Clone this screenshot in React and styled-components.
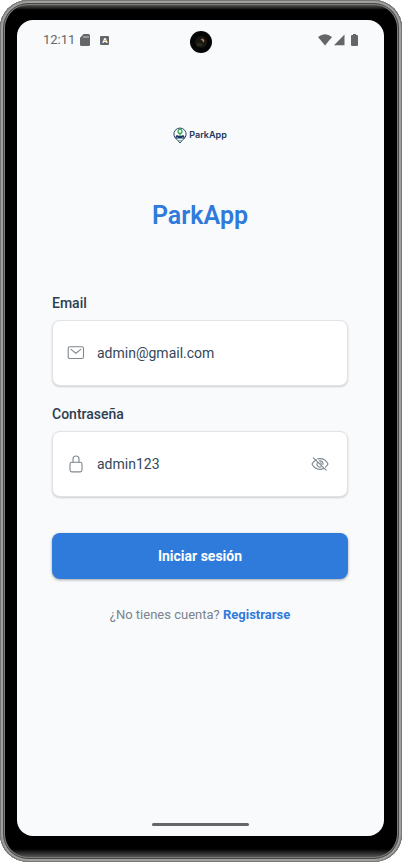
import React, { useState } from "react";
import styled, { createGlobalStyle } from "styled-components";

const GlobalStyle = createGlobalStyle`
  *, *::before, *::after { box-sizing: border-box; }
  body {
    margin: 0;
    background: #fff;
    font-family: Roboto, "Liberation Sans", sans-serif;
    color: #2c3e50;
  }
`;

const Phone = styled.div`
  min-height: 100vh;
  display: flex;
  padding: 20px 18px 26px 17px;
  border-radius: 28px;
  background: linear-gradient(
    to bottom,
    #666 4px,
    #000 10px,
    #000 calc(100% - 13px),
    #555 calc(100% - 5px)
  );
  box-shadow:
    inset 0 0 0 1px #777775,
    inset 0 0 0 3px #a0a09e,
    inset 0 0 0 4px #484848,
    inset 0 0 0 5px #7c7c7a;
`;

const Screen = styled.div`
  flex: 1;
  min-width: 0;
  display: flex;
  flex-direction: column;
  border-radius: 16px;
  background: #f8fafc;
`;

const StatusBar = styled.header`
  display: grid;
  grid-template-columns: 1fr 22px 1fr;
  align-items: center;
  height: 40px;
  padding: 0 26px;
  color: #666;
  font-size: 13px;
`;

const StatusGroup = styled.div`
  display: flex;
  align-items: center;
  justify-content: ${(p) => (p.$end ? "flex-end" : "flex-start")};
  gap: ${(p) => (p.$end ? "1px" : "5px")};
  svg { display: block; }
`;

const Clock = styled.time`
  line-height: 16px;
`;

const Main = styled.main`
  flex: 1;
  display: flex;
  flex-direction: column;
  padding: 64px 36px 0 35px;
`;

const Brand = styled.div`
  display: flex;
  align-items: center;
  justify-content: center;
  gap: 2px;
  height: 22px;
  color: #1b365f;
  font: 600 9px/14px Inter, sans-serif;
  svg { display: block; }
`;

const Title = styled.h1`
  margin: 54px 0 0;
  color: #2f7bdc;
  text-align: center;
  font-size: 25px;
  font-weight: 600;
  line-height: 32px;
`;

const Form = styled.form`
  display: flex;
  flex-direction: column;
  margin-top: 61px;
`;

const Field = styled.div`
  display: flex;
  flex-direction: column;
  gap: 7px;
  margin-bottom: 18px;
`;

const Label = styled.label`
  font-size: 14px;
  font-weight: 500;
  line-height: 20px;
`;

const InputBox = styled.div`
  display: flex;
  align-items: center;
  height: 66px;
  padding: 0 18px 0 14px;
  border: 1px solid #e1e3e6;
  border-radius: 8px;
  background: #fff;
  box-shadow: 0 1px 2px rgba(0, 0, 0, 0.18);
  color: #7f8791;
  svg { display: block; flex: none; }
`;

const Input = styled.input`
  flex: 1;
  min-width: 0;
  height: 40px;
  padding: 0;
  margin-left: 12px;
  border: 0;
  outline: 0;
  background: transparent;
  color: #34475a;
  font: 400 14px/20px Roboto, "Liberation Sans", sans-serif;
`;

const IconButton = styled.button`
  padding: 0;
  border: 0;
  background: none;
  color: inherit;
  cursor: pointer;
`;

const Submit = styled.button`
  height: 46px;
  margin-top: 18px;
  border: 0;
  border-radius: 8px;
  background: #2f7bdc;
  box-shadow: 0 1px 3px rgba(0, 0, 0, 0.35);
  color: #fff;
  font: 700 14px/20px Roboto, "Liberation Sans", sans-serif;
  cursor: pointer;
`;

const SignUp = styled.p`
  margin: 27px 0 0;
  color: #7b838d;
  text-align: center;
  font-size: 13px;
  line-height: 18px;
`;

const Link = styled.a`
  color: #2f7bdc;
  font-weight: 700;
  text-decoration: none;
`;

const HomeBar = styled.div`
  align-self: center;
  width: 97px;
  height: 3px;
  margin-bottom: 10px;
  border-radius: 2px;
  background: #666;
`;

const SdCard = () => (
  <svg width="10" height="12" viewBox="0 0 10 12" aria-hidden="true">
    <path d="M3.6 0H8.5Q10 0 10 1.5V10.5Q10 12 8.5 12H1.5Q0 12 0 10.5V3.8Z" fill="#666" />
    <path d="M4 2v2M6 2v2M8 2v2" stroke="#e4e5e7" strokeWidth="0.8" />
  </svg>
);

const LetterBadge = styled.span`
  width: 9px;
  height: 9px;
  margin-left: 5px;
  border-radius: 1px;
  background: #666;
  color: #fff;
  text-align: center;
  font-size: 8px;
  font-weight: 700;
  line-height: 9px;
`;

const CameraLens = styled.svg`
  display: block;
  margin-top: 4px;
`;

const Camera = () => (
  <CameraLens width="22" height="22" viewBox="0 0 22 22" aria-hidden="true">
    <circle cx="11" cy="11" r="11" fill="#050505" />
    <circle cx="11" cy="11" r="6" fill="#171614" />
    <ellipse cx="9.5" cy="13.5" rx="3" ry="1.6" fill="#2c2d13" />
    <path d="M10.5 8.2 13 7.5l1.5 2.3-.8 2-1.4-2z" fill="#b27653" />
  </CameraLens>
);

const Wifi = () => (
  <svg width="14" height="12" viewBox="0 0 14 12" aria-hidden="true">
    <path d="M0 3.1Q7-2.4 14 3.1L7 11.6Z" fill="#666" />
  </svg>
);

const Signal = () => (
  <svg width="12" height="12" viewBox="0 0 12 12" aria-hidden="true">
    <path d="M11.5 .5v10.7H1Z" fill="#666" />
  </svg>
);

const Battery = () => (
  <svg width="12" height="12" viewBox="0 0 12 12" aria-hidden="true">
    <path d="M7 0h3v1h1q1 0 1 1v9q0 1-1 1H6q-1 0-1-1V2q0-1 1-1h1z" fill="#666" />
  </svg>
);

const Logo = () => (
  <svg width="14" height="17" viewBox="0 0 14 17" aria-hidden="true">
    <path d="M4.1 12.5A6.1 6.1 0 1 1 9.9 12.5L7 16Z" fill="#fff" stroke="#244267" strokeWidth="1" />
    <circle cx="7" cy="4.4" r="2" fill="none" stroke="#35a653" strokeWidth="1.3" />
    <path d="M7 6.2v3" stroke="#35a653" strokeWidth="1.3" />
    <path d="M2.5 11.6V9.8L3.4 8.2h1.5l1 .9h2.2l1-.9h1.5l.9 1.6v1.8Z" fill="#1b365f" />
    <path d="M3.7 10.4h1M9.3 10.4h1" stroke="#d6e1ec" strokeWidth="0.8" />
    <path d="M5.4 13.4h3.2" stroke="#35a653" strokeWidth="0.7" />
  </svg>
);

const Mail = () => (
  <svg width="18" height="18" viewBox="0 0 18 18" fill="none" stroke="currentColor" strokeWidth="1.1" strokeLinecap="round" strokeLinejoin="round" aria-hidden="true">
    <rect x="1.2" y="2.7" width="15.3" height="11.8" rx="1.6" />
    <path d="m4 5.4 4.9 3.8 4.9-3.8" />
  </svg>
);

const Lock = () => (
  <svg width="18" height="18" viewBox="0 0 18 18" fill="none" stroke="currentColor" strokeWidth="1.1" strokeLinecap="round" strokeLinejoin="round" aria-hidden="true">
    <rect x="3" y="7.2" width="12" height="9.7" rx="1.8" />
    <path d="M6 7.2V4a3 3 0 0 1 6 0v3.2" />
  </svg>
);

const EyeOff = () => (
  <svg width="18" height="18" viewBox="0 0 18 18" fill="none" stroke="currentColor" strokeWidth="1.1" strokeLinecap="round" strokeLinejoin="round" aria-hidden="true">
    <path d="M2.3 2.8 15.2 15.2" />
    <path d="M5.2 4.7C3.3 5.7 2 7.3 1 9c1.7 3.3 4.6 5.4 8 5.4 1.3 0 2.5-.3 3.6-.9" />
    <path d="M6.8 3.9A8 8 0 0 1 9 3.6c3.4 0 6.4 2.1 8 5.4-.6 1.2-1.5 2.3-2.5 3.1" />
    <path d="M6.3 7.7A3 3 0 0 0 10.3 11.8M8.5 5.9A3 3 0 0 1 12 9.5" />
    <path d="M9 7.7a1.4 1.4 0 0 1 1.3 1.4" />
  </svg>
);

export default function App() {
  const [email, setEmail] = useState("admin@gmail.com");
  const [password, setPassword] = useState("admin123");
  const [visible, setVisible] = useState(true);

  return (
    <>
      <GlobalStyle />
      <Phone>
        <Screen>
          <StatusBar>
            <StatusGroup>
              <Clock>12:11</Clock>
              <SdCard />
              <LetterBadge>A</LetterBadge>
            </StatusGroup>
            <Camera />
            <StatusGroup $end>
              <Wifi />
              <Signal />
              <Battery />
            </StatusGroup>
          </StatusBar>
          <Main>
            <Brand>
              <Logo />
              <span>ParkApp</span>
            </Brand>
            <Title>ParkApp</Title>
            <Form onSubmit={(e) => e.preventDefault()}>
              <Field>
                <Label htmlFor="email">Email</Label>
                <InputBox>
                  <Mail />
                  <Input id="email" type="email" value={email} onChange={(e) => setEmail(e.target.value)} />
                </InputBox>
              </Field>
              <Field>
                <Label htmlFor="password">Contraseña</Label>
                <InputBox>
                  <Lock />
                  <Input
                    id="password"
                    type={visible ? "text" : "password"}
                    value={password}
                    onChange={(e) => setPassword(e.target.value)}
                  />
                  <IconButton
                    type="button"
                    aria-label={visible ? "Ocultar contraseña" : "Mostrar contraseña"}
                    onClick={() => setVisible(!visible)}
                  >
                    <EyeOff />
                  </IconButton>
                </InputBox>
              </Field>
              <Submit type="submit">Iniciar sesión</Submit>
            </Form>
            <SignUp>
              ¿No tienes cuenta? <Link href="#registro">Registrarse</Link>
            </SignUp>
          </Main>
          <HomeBar />
        </Screen>
      </Phone>
    </>
  );
}
